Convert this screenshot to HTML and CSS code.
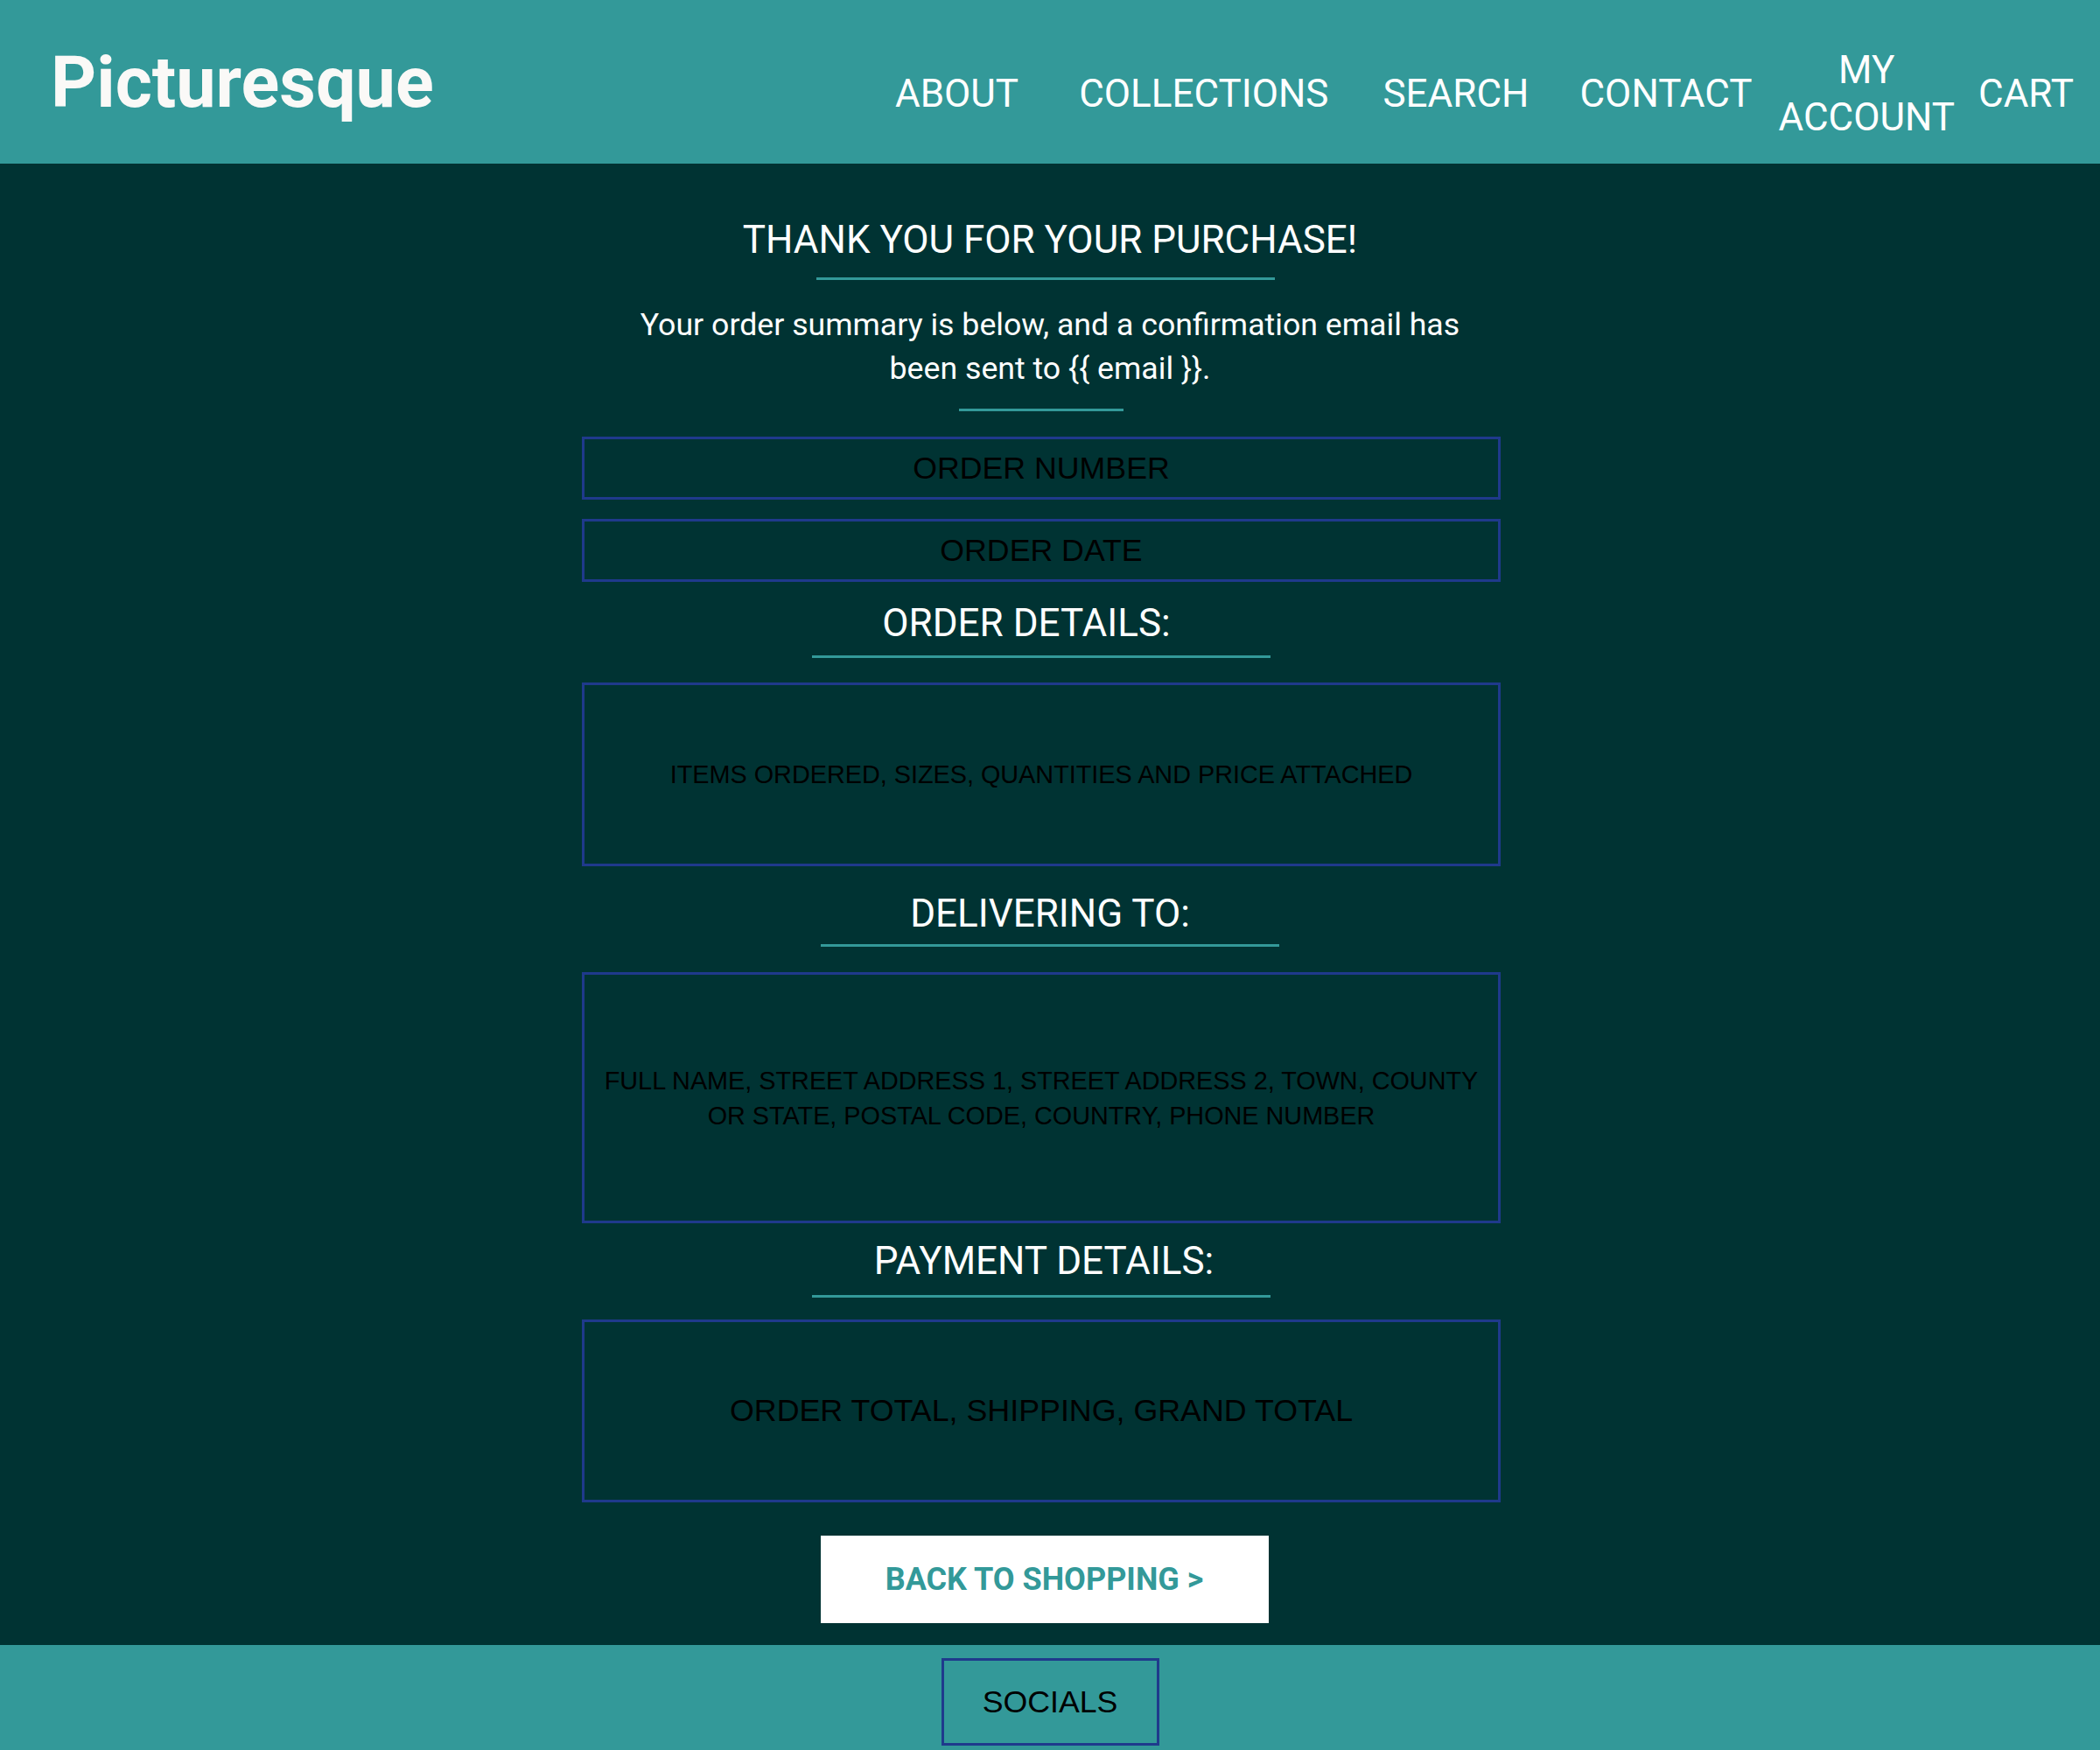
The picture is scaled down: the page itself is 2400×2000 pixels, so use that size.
FILE: index.html
```html
<!DOCTYPE html>
<html lang="en">
<head>
<meta charset="utf-8">
<title>Picturesque - Order confirmation</title>
<link rel="stylesheet" href="styles.css">
</head>
<body>
<header class="site-header">
  <a class="logo" href="#">Picturesque</a>
  <nav class="main-nav">
    <ul class="nav-list">
      <li class="nav-item nav-item--about"><a href="#">ABOUT</a></li>
      <li class="nav-item nav-item--collections"><a href="#">COLLECTIONS</a></li>
      <li class="nav-item nav-item--search"><a href="#">SEARCH</a></li>
      <li class="nav-item nav-item--contact"><a href="#">CONTACT</a></li>
      <li class="nav-item nav-item--account"><a href="#">MY ACCOUNT</a></li>
      <li class="nav-item nav-item--cart"><a href="#">CART</a></li>
    </ul>
  </nav>
</header>

<main class="confirmation">
  <h1 class="page-title">THANK YOU FOR YOUR PURCHASE!</h1>
  <div class="rule rule--title"></div>
  <p class="lead">Your order summary is below, and a confirmation email has been sent to {{ email }}.</p>
  <div class="rule rule--short"></div>

  <div class="info-box info-box--line info-box--first">ORDER NUMBER</div>
  <div class="info-box info-box--line info-box--second">ORDER DATE</div>

  <h2 class="section-title section-title--order">ORDER DETAILS:</h2>
  <div class="rule rule--order"></div>
  <div class="info-box info-box--items">ITEMS ORDERED, SIZES, QUANTITIES AND PRICE ATTACHED</div>

  <h2 class="section-title section-title--delivery">DELIVERING TO:</h2>
  <div class="rule rule--delivery"></div>
  <div class="info-box info-box--address">FULL NAME, STREET ADDRESS 1, STREET ADDRESS 2, TOWN, COUNTY OR STATE, POSTAL CODE, COUNTRY, PHONE NUMBER</div>

  <h2 class="section-title section-title--payment">PAYMENT DETAILS:</h2>
  <div class="rule rule--payment"></div>
  <div class="info-box info-box--payment">ORDER TOTAL, SHIPPING, GRAND TOTAL</div>

  <a class="shop-button" href="#">BACK TO SHOPPING &gt;</a>
</main>

<footer class="site-footer">
  <div class="socials">SOCIALS</div>
</footer>
</body>
</html>
```

FILE: styles.css
```css
* {
  box-sizing: border-box;
}

html, body {
  margin: 0;
  padding: 0;
}

body {
  font-family: Roboto, "Noto Sans", sans-serif;
  background: #003333;
  color: #ffffff;
}

a {
  color: inherit;
  text-decoration: none;
}

/* Header */
.site-header {
  height: 187px;
  background: #339999;
  display: flex;
  align-items: center;
  justify-content: space-between;
  padding: 0 15px 0 58px;
}

.logo {
  font-family: Roboto, sans-serif;
  font-weight: 700;
  font-size: 81px;
  color: #faf9f7;
  line-height: 1.172;
  margin-top: 3px;
}

.main-nav {
  padding-top: 27px;
}

.nav-list {
  list-style: none;
  margin: 0;
  padding: 0;
  display: flex;
  align-items: center;
}

.nav-item {
  font-size: 44px;
  line-height: 54px;
  padding: 0 15px;
  text-align: center;
  color: #ffffff;
}

.nav-item--collections {
  margin-left: 39px;
}

.nav-item--search {
  margin-left: 32px;
}

.nav-item--contact {
  margin-left: 28px;
}

.nav-item--account {
  padding-right: 12px;
}

.nav-item--account a {
  display: block;
  width: min-content;
}

/* Main */
.confirmation {
  display: flex;
  flex-direction: column;
  align-items: center;
  padding: 60px 0 25px;
}

.page-title,
.section-title {
  margin: 0;
  font-weight: 400;
  font-size: 44px;
  line-height: 54px;
  text-align: center;
  color: #ffffff;
}

.rule {
  height: 3px;
  width: 524px;
  background: #339999;
}

.rule--title {
  margin-top: 16px;
  margin-right: 10px;
}

.lead {
  margin: 26px 0 0;
  max-width: 1000px;
  font-size: 35.7px;
  line-height: 50px;
  text-align: center;
}

.rule--short {
  width: 188px;
  margin-top: 21px;
  margin-right: 20px;
}

.info-box {
  width: 1050px;
  margin-right: 20px;
  border: 3px solid #1f3a8c;
  display: flex;
  align-items: center;
  justify-content: center;
  text-align: center;
  color: #000000;
  font-family: "Liberation Sans", Arial, sans-serif;
}

.info-box--line {
  height: 72px;
  font-size: 35.7px;
}

.info-box--first {
  margin-top: 29px;
}

.info-box--second {
  margin-top: 22px;
}

.section-title--order {
  margin-top: 20px;
  margin-right: 54px;
}

.rule--order {
  margin-top: 10px;
  margin-right: 20px;
}

.info-box--items {
  margin-top: 28px;
  height: 210px;
  font-size: 28.8px;
}

.section-title--delivery {
  margin-top: 27px;
}

.rule--delivery {
  margin-top: 8px;
}

.info-box--address {
  margin-top: 29px;
  height: 287px;
  font-size: 28.8px;
  line-height: 40px;
  padding: 0 22px;
}

.section-title--payment {
  margin-top: 16px;
  margin-right: 14px;
}

.rule--payment {
  margin-top: 12px;
  margin-right: 20px;
}

.info-box--payment {
  margin-top: 25px;
  height: 209px;
  font-size: 35.8px;
}

.shop-button {
  margin-top: 38px;
  margin-right: 13px;
  width: 512px;
  height: 100px;
  background: #ffffff;
  color: #339999;
  font-weight: 700;
  font-size: 36px;
  display: flex;
  align-items: center;
  justify-content: center;
}

/* Footer */
.site-footer {
  background: #339999;
  display: flex;
  justify-content: center;
  padding: 15px 0 15px;
}

.socials {
  width: 249px;
  height: 100px;
  border: 3px solid #1f3a8c;
  display: flex;
  align-items: center;
  justify-content: center;
  font-family: "Liberation Sans", Arial, sans-serif;
  font-size: 35.7px;
  color: #000000;
}
```
